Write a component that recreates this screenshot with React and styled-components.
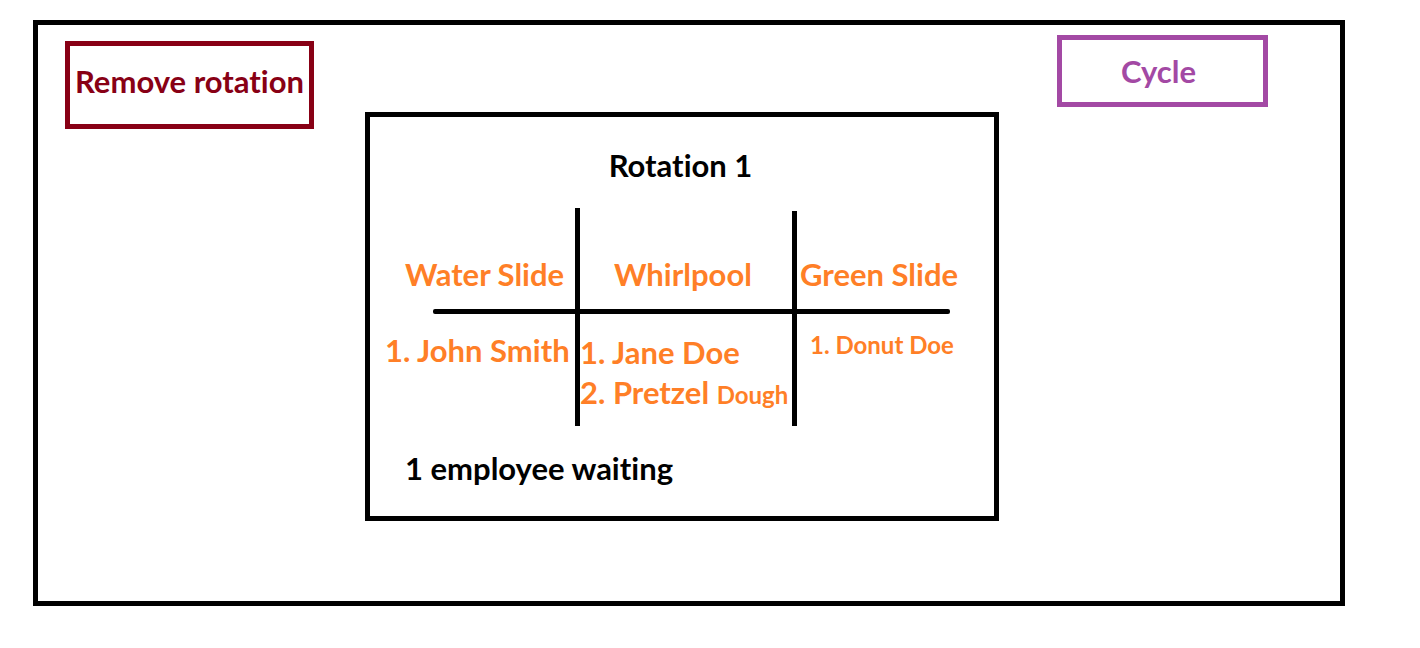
import React from "react";
import styled, { createGlobalStyle } from "styled-components";

const GlobalStyle = createGlobalStyle`
  *, *::before, *::after { box-sizing: border-box; }
  body {
    margin: 0;
    background: #fff;
    color: #000;
    font-family: Lato, "Liberation Sans", sans-serif;
    font-size: 31px;
    font-weight: 700;
    font-variant-ligatures: none;
    line-height: 40px;
  }
`;

const Page = styled.main`
  padding: 20px 75px 42px 33px;
`;

const Board = styled.div`
  display: grid;
  grid-template-columns: 300fr minmax(auto, 634px) 269fr;
  align-items: start;
  padding: 10px 72px 80px 27px;
  border: 5px solid #000;
`;

const ActionButton = styled.button`
  border: 5px solid currentColor;
  background: #fff;
  font: inherit;
  font-variant-ligatures: none;
  white-space: nowrap;
  cursor: pointer;
`;

const RemoveButton = styled(ActionButton)`
  justify-self: start;
  width: 249px;
  margin-top: 6px;
  padding: 15px 0 23px;
  color: #880015;
`;

const CycleButton = styled(ActionButton)`
  justify-self: end;
  width: 211px;
  padding: 11px 16px 11px 8px;
  color: #a349a4;
`;

const Card = styled.section`
  margin-top: 77px;
  padding: 28px 32px 28px 15px;
  border: 5px solid #000;
`;

const Title = styled.h1`
  margin: 0 0 23px;
  padding-left: 14px;
  font-size: inherit;
  text-align: center;
`;

const Stations = styled.table`
  width: 100%;
  table-layout: fixed;
  border-collapse: separate;
  border-spacing: 0;
  color: #ff7f27;
  white-space: nowrap;
`;

const Column = styled.col`
  width: ${({ $width }) => $width};
`;

const StationHead = styled.th`
  padding: 46px 0 0;
  text-align: left;
  background: ${({ $dividerTop }) =>
    $dividerTop === undefined
      ? "none"
      : `linear-gradient(#000, #000) no-repeat 0 ${$dividerTop}px / 5px 100%`};

  &::after {
    content: "";
    display: block;
    height: 5px;
    margin-top: 15px;
    background: #000;
  }

  &:first-child::after {
    margin-left: 48px;
    border-radius: 2px 0 0 2px;
  }

  &:last-child::after {
    margin-right: 12px;
    border-radius: 0 2px 2px 0;
  }
`;

const StationName = styled.span`
  display: block;
  padding-left: ${({ $indent }) => $indent}px;
`;

const StationCell = styled.td`
  padding: ${({ $top }) => $top}px 0 14px;
  vertical-align: top;

  & + & {
    border-left: 5px solid #000;
  }
`;

const Queue = styled.ol`
  margin: 0;
  padding: 0 0 0 ${({ $indent }) => $indent || 0}px;
  list-style: none;
  font-size: ${({ $small }) => ($small ? "24px" : "inherit")};
`;

const SmallText = styled.span`
  font-size: 24px;
  line-height: 1;
`;

const Waiting = styled.p`
  margin: 22px 0 0;
  padding-left: 20px;
`;

export default function App() {
  return (
    <>
      <GlobalStyle />
      <Page>
        <Board>
          <RemoveButton type="button">Remove rotation</RemoveButton>
          <Card>
            <Title>Rotation 1</Title>
            <Stations>
              <colgroup>
                <Column $width="190px" />
                <Column $width="217px" />
                <Column $width="auto" />
              </colgroup>
              <thead>
                <tr>
                  <StationHead scope="col">
                    <StationName $indent={20}>Water Slide</StationName>
                  </StationHead>
                  <StationHead scope="col" $dividerTop={0}>
                    <StationName $indent={39}>Whirlpool</StationName>
                  </StationHead>
                  <StationHead scope="col" $dividerTop={3}>
                    <StationName $indent={8}>Green Slide</StationName>
                  </StationHead>
                </tr>
              </thead>
              <tbody>
                <tr>
                  <StationCell $top={16}>
                    <Queue>
                      <li>1. John Smith</li>
                    </Queue>
                  </StationCell>
                  <StationCell $top={18}>
                    <Queue>
                      <li>1. Jane Doe</li>
                      <li>
                        2. Pretzel <SmallText>Dough</SmallText>
                      </li>
                    </Queue>
                  </StationCell>
                  <StationCell $top={11}>
                    <Queue $indent={13} $small>
                      <li>1. Donut Doe</li>
                    </Queue>
                  </StationCell>
                </tr>
              </tbody>
            </Stations>
            <Waiting>1 employee waiting</Waiting>
          </Card>
          <CycleButton type="button">Cycle</CycleButton>
        </Board>
      </Page>
    </>
  );
}
